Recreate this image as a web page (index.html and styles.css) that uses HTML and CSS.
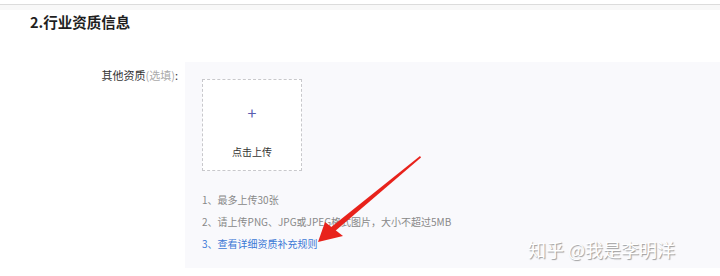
FILE: index.html
```html
<!DOCTYPE html>
<html lang="zh-CN">
<head>
  <meta charset="UTF-8" />
  <meta name="viewport" content="width=device-width, initial-scale=1.0"/>
  <title>行业资质信息</title>
  <link rel="stylesheet" href="styles.css">
</head>
<body>
  <div class="topbar"></div>

  <h2 class="section-title">2.行业资质信息</h2>

  <div class="form-row">
    <label class="form-label">其他资质<span class="optional">(选填)</span>:</label>
    <div class="form-panel">
      <div class="upload-box">
        <span class="upload-plus">+</span>
        <span class="upload-text">点击上传</span>
      </div>
      <ul class="hints">
        <li>1、最多上传30张</li>
        <li>2、请上传PNG、JPG或JPEG格式图片，大小不超过5MB</li>
        <li><a class="rule-link" href="#">3、查看详细资质补充规则</a></li>
      </ul>
    </div>
  </div>

  <!-- annotation arrow drawn over the screenshot -->
  <svg class="arrow" width="720" height="276" viewBox="0 0 720 276">
    <polygon points="420,156 421,157.5 334,232 330,228" fill="#e8221b"/>
    <polygon points="318,242 325,222 343,236" fill="#e8221b"/>
  </svg>

  <div class="watermark">知乎 @我是李明洋</div>
</body>
</html>
```

FILE: styles.css
```css
body {
  margin: 0;
  background-color: #fff;
  font-family: "Noto Sans CJK SC", "Noto Sans", sans-serif;
  color: #333;
  position: relative;
  height: 276px;
  overflow: hidden;
}

.topbar {
  height: 4px;
  border-bottom: 1px solid #dcdcdc;
  background-color: #fff;
  box-shadow: 0 5px 0 #f8f8f8;
}

.section-title {
  margin: 7px 0 0 30px;
  font-size: 14.5px;
  line-height: 20px;
  font-weight: bold;
  color: #1f1f1f;
}

.form-row {
  display: flex;
  margin-top: 30px;
}

.form-label {
  width: 178px;
  text-align: right;
  font-size: 11px;
  line-height: 16px;
  padding-top: 5px;
  margin-right: 7px;
  color: #333;
}

.optional {
  color: #aaa;
}

.form-panel {
  flex: 1;
  background-color: #f9f9fc;
  padding: 17px 0 13px 17px;
}

.upload-box {
  width: 98px;
  height: 90px;
  border: 1px dashed #c8c8cc;
  background-color: #fff;
  display: flex;
  flex-direction: column;
  align-items: center;
}

.upload-plus {
  margin-top: 24px;
  font-size: 16px;
  line-height: 16px;
  color: #5a5cb0;
}

.upload-text {
  margin-top: 25px;
  font-size: 10px;
  line-height: 14px;
  color: #333;
}

.hints {
  list-style: none;
  margin: 18px 0 0 0;
  padding: 0;
  font-size: 10px;
  line-height: 22px;
  color: #888;
}

.rule-link {
  color: #3b78d6;
  text-decoration: none;
}

.arrow {
  position: absolute;
  left: 0;
  top: 0;
}

.watermark {
  position: absolute;
  left: 528px;
  top: 236px;
  font-size: 18px;
  line-height: 26px;
  color: #fff;
  text-shadow: 1px 1px 1px #9a9a9a;
  white-space: nowrap;
}
```
